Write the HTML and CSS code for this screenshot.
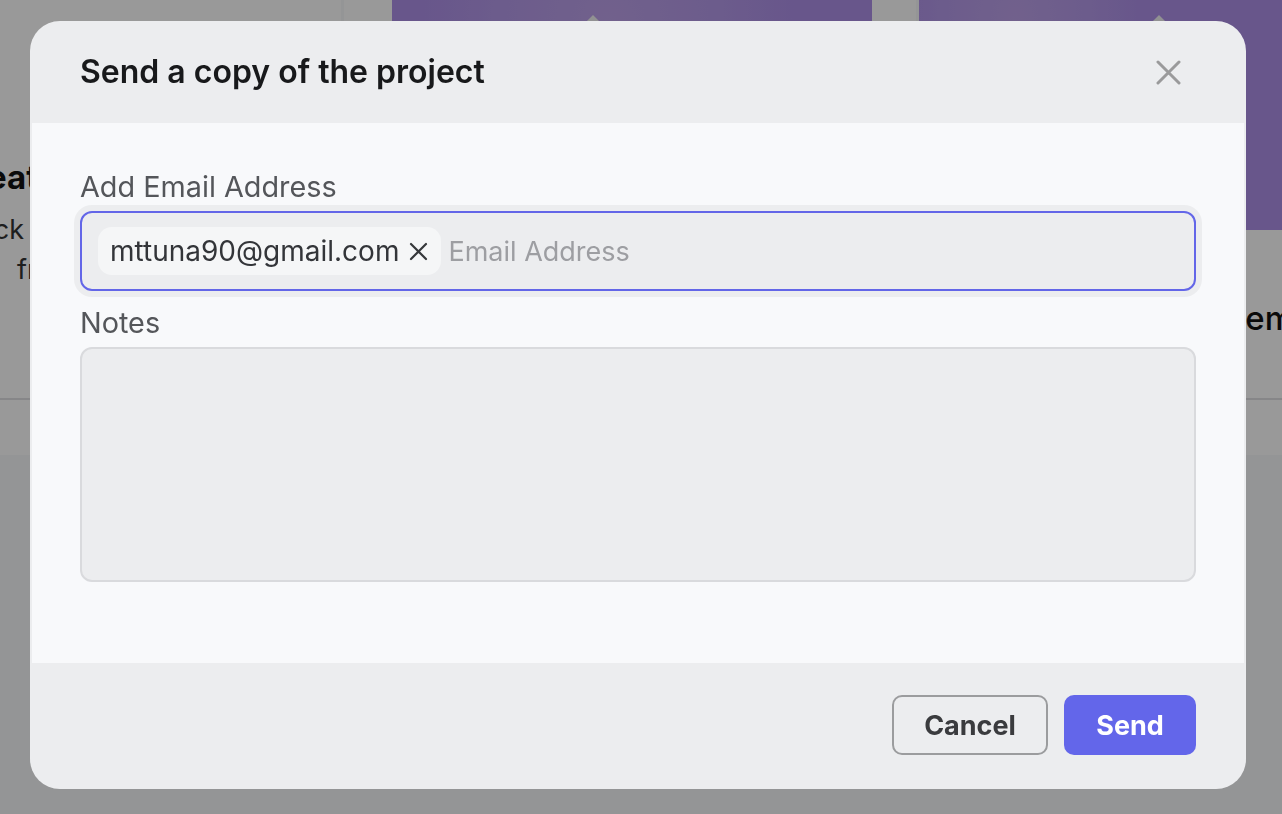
FILE: index.html
```html
<!DOCTYPE html>
<html lang="en">
<head>
<meta charset="utf-8">
<title>Send a copy of the project</title>
<link rel="stylesheet" href="styles.css">
</head>
<body>
<div class="page">
  <div class="cards">
    <div class="card card-new">
      <div class="card-body new-body">
        <div class="new-title">Create new</div>
        <div class="new-desc first">Click to start</div>
        <div class="new-desc second">from scratch</div>
      </div>
      <div class="card-foot"></div>
    </div>
    <div class="card card-a">
      <div class="card-body">
        <div class="thumb thumb-a"><span class="thumb-mark"></span></div>
        <div class="card-title">Marketing Site</div>
      </div>
      <div class="card-foot"></div>
    </div>
    <div class="card card-b">
      <div class="card-body">
        <div class="thumb thumb-b"><span class="thumb-mark"></span></div>
        <div class="card-title title-b">Design System</div>
      </div>
      <div class="card-foot"></div>
    </div>
  </div>
</div>
<div class="scrim"></div>
<div class="modal" role="dialog" aria-labelledby="modal-title">
  <div class="modal-header">
    <h2 class="modal-title" id="modal-title">Send a copy of the project</h2>
    <button class="close-btn" aria-label="Close">
      <svg width="25" height="25" viewBox="0 0 25 25"><path d="M2 2L23 23M23 2L2 23" stroke="#9a9a9b" stroke-width="3" stroke-linecap="round" fill="none"/></svg>
    </button>
  </div>
  <div class="modal-body">
    <label class="field-label" for="email">Add Email Address</label>
    <div class="email-field">
      <span class="chip">mttuna90@gmail.com<svg class="chip-x" width="19" height="19" viewBox="0 0 19 19"><path d="M2 2L17 17M17 2L2 17" stroke="#36383b" stroke-width="2.2" stroke-linecap="round" fill="none"/></svg></span>
      <input class="email-input" id="email" type="text" placeholder="Email Address">
    </div>
    <label class="field-label notes-label" for="notes">Notes</label>
    <textarea class="notes" id="notes"></textarea>
  </div>
  <div class="modal-footer">
    <button class="btn btn-cancel">Cancel</button>
    <button class="btn btn-send">Send</button>
  </div>
</div>
</body>
</html>
```
FILE: styles.css
```css
* { box-sizing: border-box; }
html, body { margin: 0; padding: 0; }
body {
  width: 1282px;
  height: 814px;
  overflow: hidden;
  background: #f7f8fa;
  font-family: Inter, "Noto Sans", "Liberation Sans", sans-serif;
}

/* background page */
.page { height: 814px; overflow: hidden; }
.cards { display: flex; gap: 3px; margin-left: -200px; }
.card {
  flex: none;
  height: 455px;
  background: #ffffff;
  display: flex;
  flex-direction: column;
}
.card-new { width: 541px; }
.card-a { width: 572px; padding-left: 48px; }
.card-b { width: 640px; }
.card-body { height: 398px; flex: none; }
.card-foot { flex: 1; border-top: 2px solid #dfe0e3; }
.new-body { padding-top: 157px; }
.new-title {
  font-size: 33px;
  line-height: 40px;
  font-weight: 700;
  color: #111;
  padding-left: 150px;
  white-space: nowrap;
}
.new-desc {
  font-size: 27px;
  line-height: 40px;
  color: #333;
  white-space: nowrap;
}
.new-desc.first { margin-top: 13px; padding-left: 161px; }
.new-desc.second { padding-left: 217px; }
.thumb {
  position: relative;
  height: 230px;
  background: radial-gradient(ellipse 40% 90% at 45% 10%, #bda2ea 0%, #b499e9 60%, #ad8fe8 100%);
}
.thumb-a { width: 480px; }
.thumb-b { width: 640px; background: radial-gradient(ellipse 20% 90% at 15% 10%, #bda2ea 0%, #b499e9 60%, #ad8fe8 100%); }
.thumb-mark {
  position: absolute;
  top: 15px;
  width: 16px;
  height: 16px;
  background: #f2f2f4;
  transform-origin: top left;
  transform: rotate(45deg);
}
.thumb-a .thumb-mark { left: 201px; }
.thumb-b .thumb-mark { left: 240px; }
.card-title {
  margin-top: 68px;
  font-size: 33px;
  line-height: 40px;
  font-weight: 500;
  color: #111;
  white-space: nowrap;
}
.title-b { text-align: right; padding-right: 265px; }

.scrim {
  position: fixed;
  inset: 0;
  background: rgba(0, 0, 0, 0.4);
}

/* modal */
.modal {
  position: fixed;
  left: 30px;
  top: 21px;
  width: 1216px;
  height: 768px;
  padding: 0 2px;
  border-radius: 30px;
  background: #ecedef;
  overflow: hidden;
  display: flex;
  flex-direction: column;
}
.modal-header {
  height: 102px;
  flex: none;
  display: flex;
  align-items: center;
  justify-content: space-between;
  padding: 0 63px 0 48px;
}
.modal-title {
  margin: 0;
  font-size: 32px;
  line-height: 40px;
  font-weight: 600;
  color: #18191b;
}
.close-btn {
  display: block;
  width: 25px;
  height: 25px;
  padding: 0;
  border: none;
  background: none;
}
.close-btn svg { display: block; }

.modal-body {
  flex: 1;
  background: #f8f9fb;
  padding: 46px 48px 0;
}
.field-label {
  display: block;
  font-size: 28.8px;
  line-height: 36px;
  color: #54565a;
  margin-bottom: 6px;
}
.notes-label { margin-top: 14px; }
.email-field {
  display: flex;
  align-items: center;
  gap: 7px;
  height: 80px;
  padding-left: 16px;
  border: 2px solid #6366e8;
  border-radius: 12px;
  background: #ecedef;
  box-shadow: 0 0 0 6px #ecedef;
}
.chip {
  display: flex;
  align-items: center;
  gap: 10px;
  height: 48px;
  padding: 0 13px 0 12px;
  border-radius: 14px;
  background: #f5f6f7;
  font-size: 28px;
  color: #333539;
  white-space: nowrap;
}
.chip-x { display: block; }
.email-input {
  flex: 1;
  min-width: 0;
  height: 48px;
  border: none;
  outline: none;
  background: transparent;
  font: 400 27px Inter, "Noto Sans", sans-serif;
  color: #333539;
  padding: 0;
}
.email-input::placeholder { color: #9d9ea2; }
.notes {
  display: block;
  width: 100%;
  height: 235px;
  border: 2px solid #d9dadd;
  border-radius: 12px;
  background: #ecedef;
  resize: none;
  outline: none;
  font: 400 27px Inter, "Noto Sans", sans-serif;
}

.modal-footer {
  height: 126px;
  flex: none;
  display: flex;
  justify-content: flex-end;
  align-items: center;
  gap: 16px;
  padding: 0 48px 2px;
}
.btn {
  height: 60px;
  border-radius: 10px;
  font: 700 27px Inter, "Noto Sans", sans-serif;
  padding: 0;
}
.btn-cancel {
  width: 156px;
  border: 2px solid #9b9c9e;
  background: transparent;
  color: #3a3b3e;
}
.btn-send {
  width: 132px;
  border: none;
  background: #6366ea;
  color: #ffffff;
}
```
